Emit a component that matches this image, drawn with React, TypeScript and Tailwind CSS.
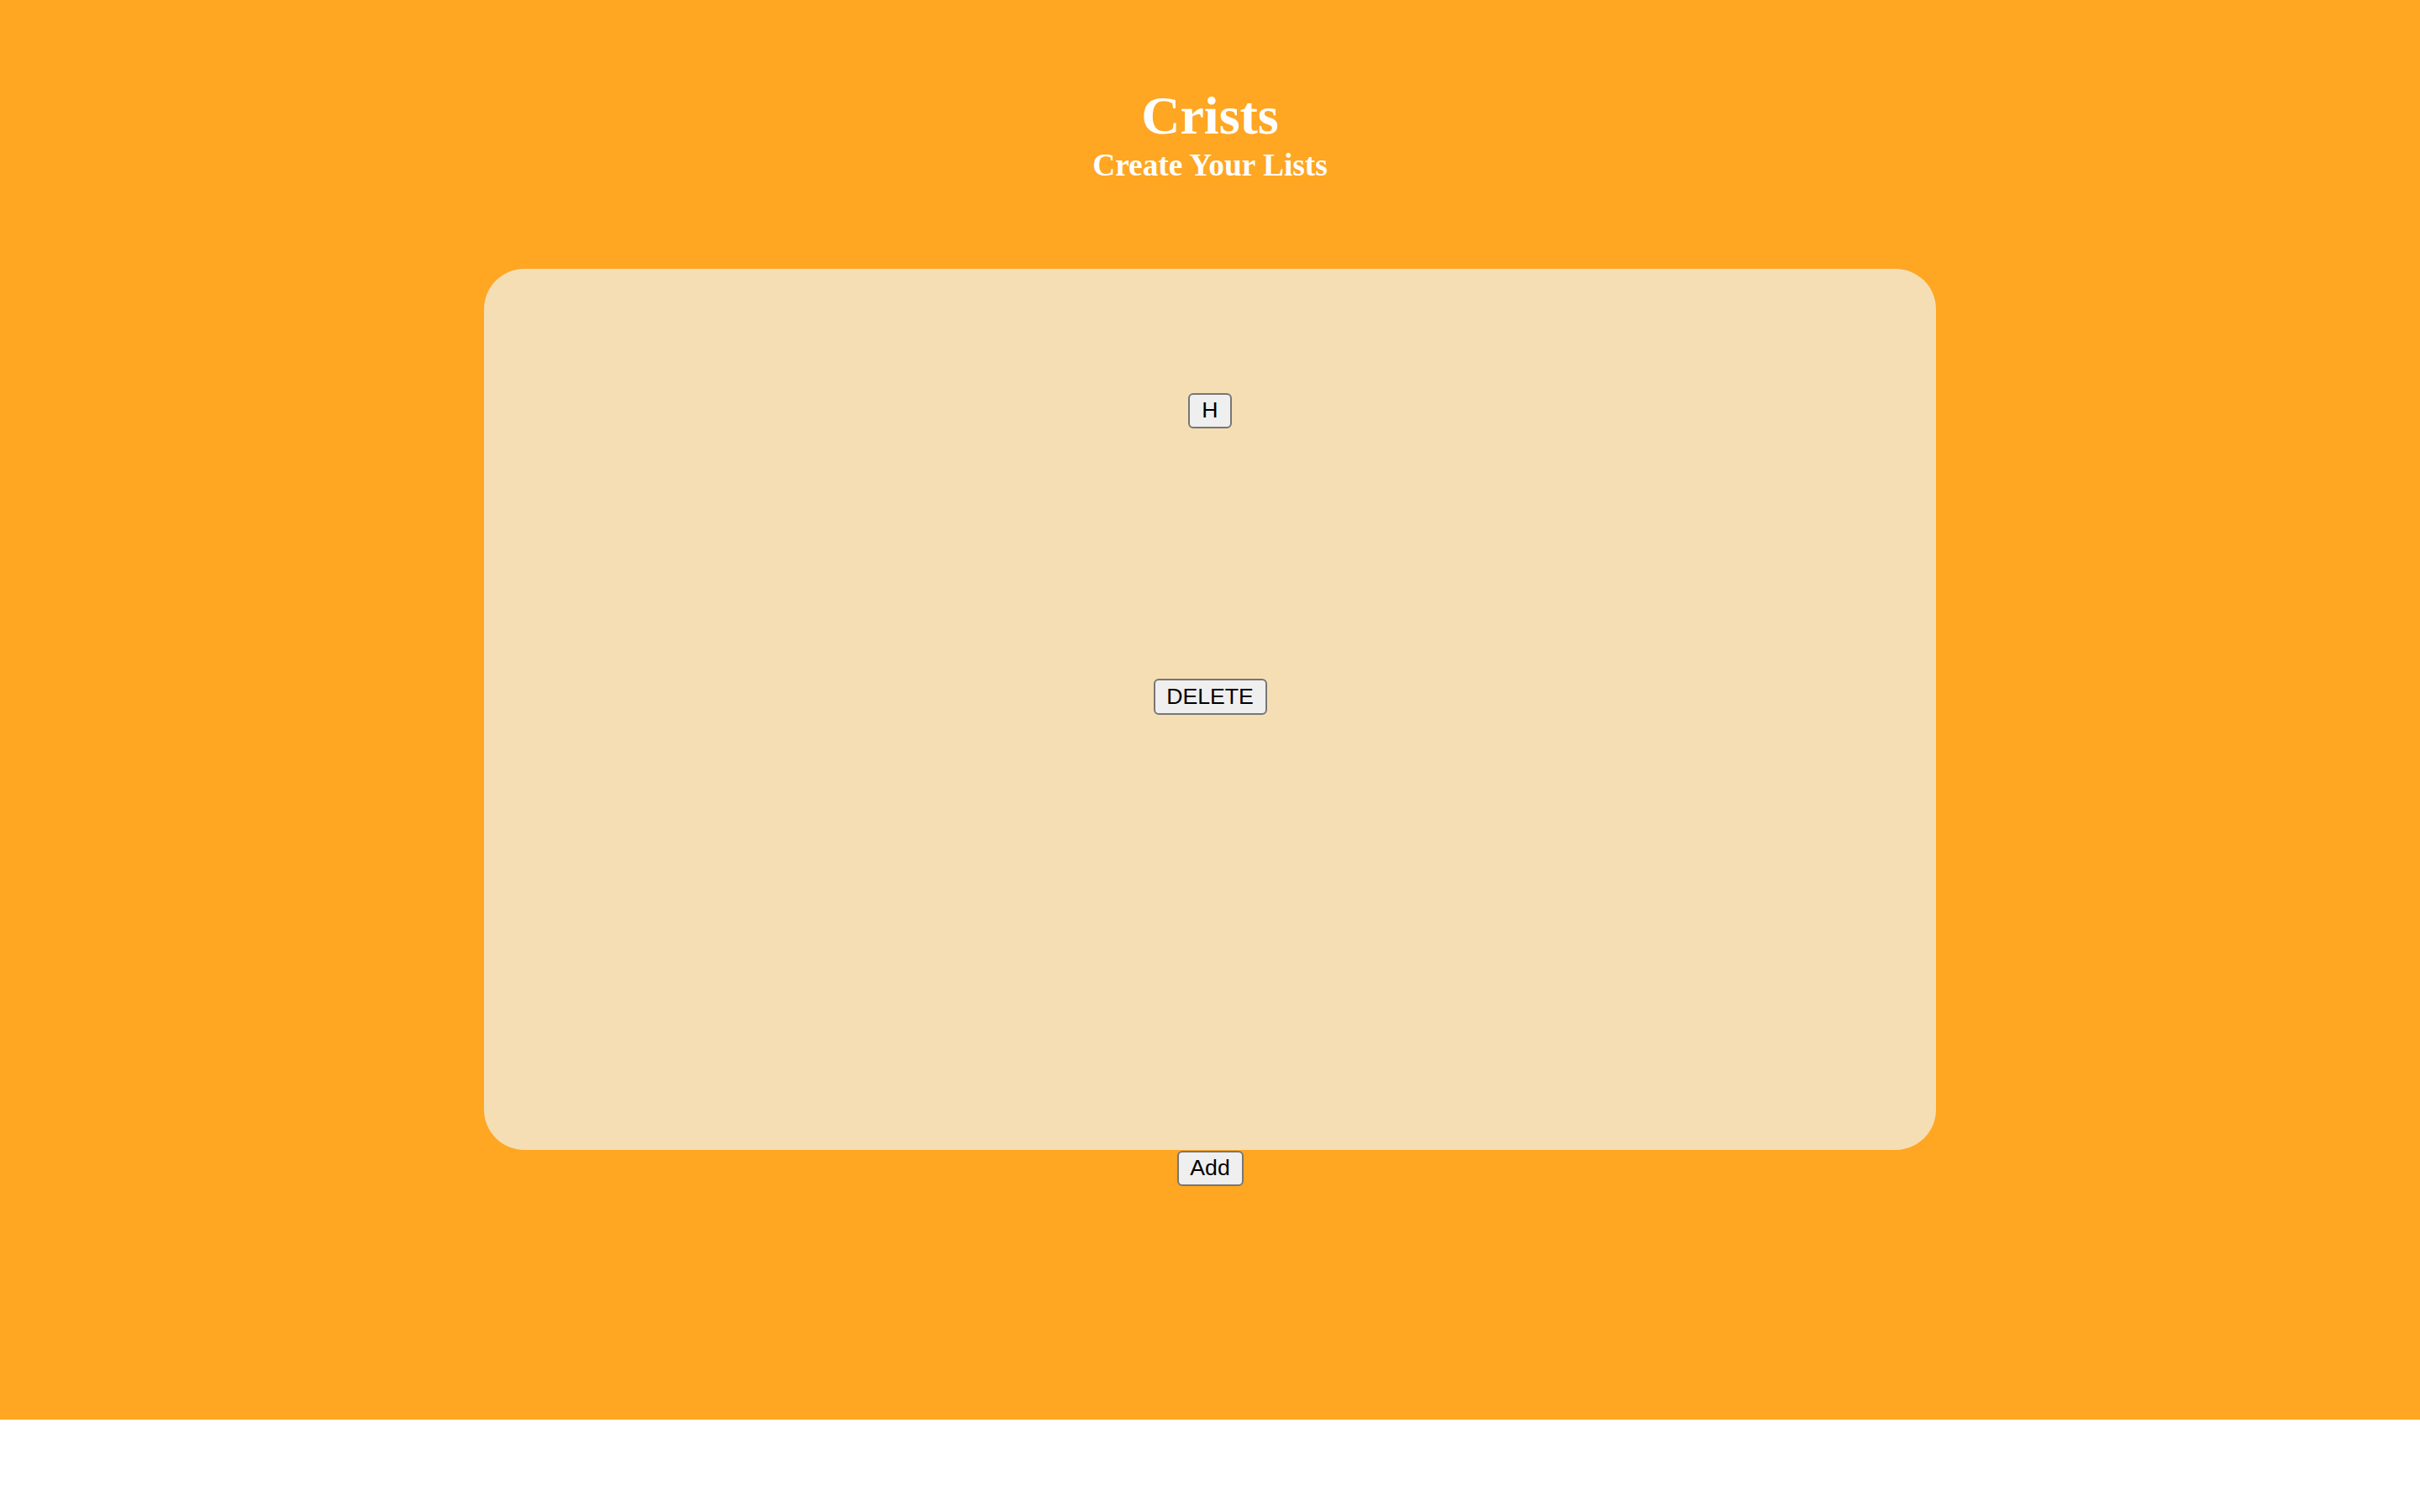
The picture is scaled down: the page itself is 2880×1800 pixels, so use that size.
export default function App() {
  const btn =
    "inline-flex items-center justify-center h-[42px] px-[14px] bg-[#efefef] border-2 border-[#767676] rounded-[6px] text-black text-[26.67px] leading-none font-['Liberation_Sans',Arial,sans-serif]";
  return (
    <div className="w-full h-[1690px] bg-[#ffa623] flex flex-col items-center">
      <div className="pt-[101px] flex flex-col items-center text-white font-['Liberation_Serif','Times_New_Roman',serif] font-bold">
        <h1 className="text-[64px] leading-[73.6px]">Crists</h1>
        <h3 className="text-[37.4px] leading-[43px]">Create Your Lists</h3>
      </div>
      <div className="mt-[102px] w-[1728px] h-[1049px] bg-[#f5deb3] rounded-[48px] flex flex-col items-center pt-[148px]">
        <button className={btn + " w-[52px]"}>H</button>
        <button className={btn + " mt-[298px] w-[135px] h-[43px]"}>DELETE</button>
      </div>
      <button className={btn + " w-[79px] mt-px"}>Add</button>
    </div>
  );
}
